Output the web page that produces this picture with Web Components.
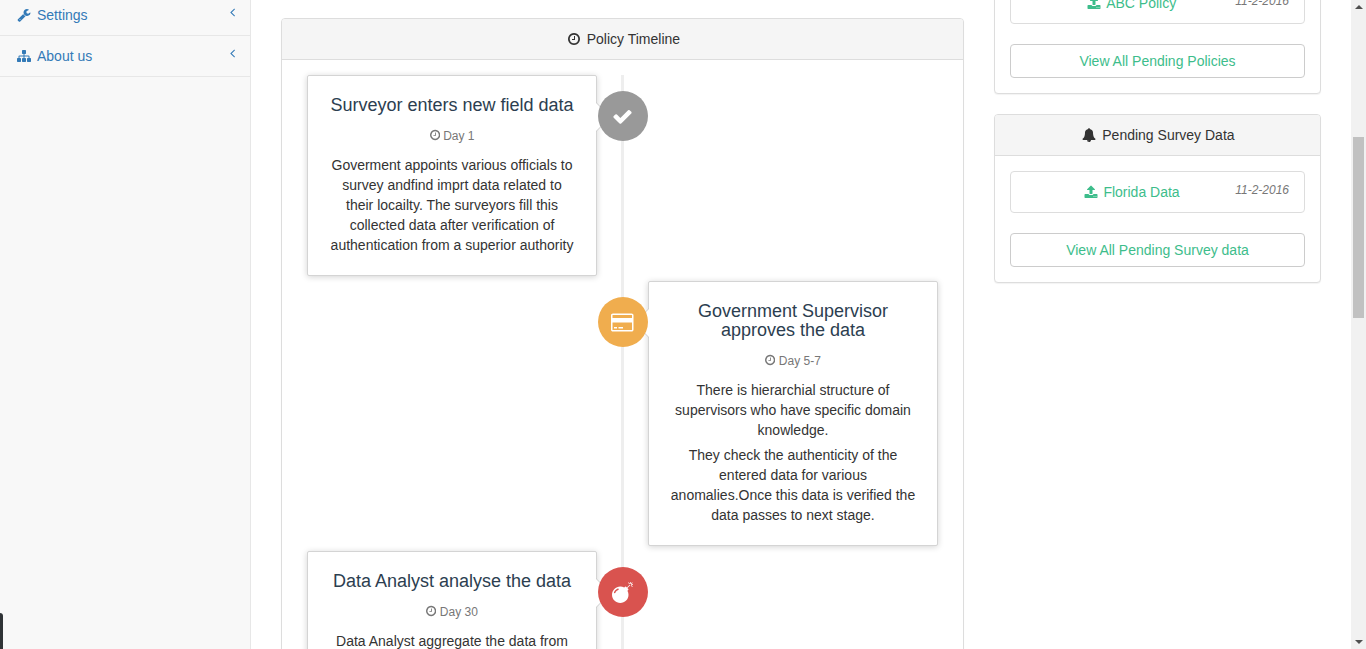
<!DOCTYPE html>
<html lang="en">
<head>
<meta charset="utf-8">
<title>Policy Timeline</title>
<style>
  html, body { margin: 0; height: 649px; overflow: hidden; background: #fff; }
  body { font: 14px/20px "Liberation Sans", Arial, sans-serif; color: #333; }
</style>
</head>
<body>
<app-shell>
  <app-sidebar slot="sidebar">
    <nav-item icon="wrench">Settings</nav-item>
    <nav-item icon="sitemap">About us</nav-item>
  </app-sidebar>

  <ui-panel slot="main" icon="clock" heading="Policy Timeline" flush>
    <policy-timeline>
      <timeline-card side="left" badge="check" color="#999" day="Day 1" heading="Surveyor enters new field data">
        <p>Goverment appoints various officials to survey andfind imprt data related to their locailty. The surveyors fill this collected data after verification of authentication from a superior authority</p>
      </timeline-card>
      <timeline-card side="right" badge="card" color="#f0ad4e" day="Day 5-7" heading="Government Supervisor approves the data">
        <p>There is hierarchial structure of supervisors who have specific domain knowledge.</p>
        <p>They check the authenticity of the entered data for various anomalies.Once this data is verified the data passes to next stage.</p>
      </timeline-card>
      <timeline-card side="left" badge="bomb" color="#d9534f" day="Day 30" heading="Data Analyst analyse the data">
        <p>Data Analyst aggregate the data from</p>
      </timeline-card>
    </policy-timeline>
  </ui-panel>

  <ui-panel slot="side" headless>
    <pending-item date="11-2-2016">ABC Policy</pending-item>
    <view-all>View All Pending Policies</view-all>
  </ui-panel>
  <ui-panel slot="side" icon="bell" heading="Pending Survey Data">
    <pending-item date="11-2-2016">Florida Data</pending-item>
    <view-all>View All Pending Survey data</view-all>
  </ui-panel>

  <fake-scrollbar slot="scrollbar"></fake-scrollbar>
</app-shell>

<script>
// font awesome 4 glyphs, flipped to svg coordinates
const ICONS = {
  check: ['0 0 1792 1792', 'M1671 566q0 40-28 68l-724 724-136 136q-28 28-68 28t-68-28l-136-136-362-362q-28-28-28-68t28-68l136-136q28-28 68-28t68 28l294 295 656-657q28-28 68-28t68 28l136 136q28 28 28 68z'],
  clock: ['128 0 1536 1792', 'M1024 544v448q0 14-9 23t-23 9h-320q-14 0-23-9t-9-23v-64q0-14 9-23t23-9h224v-352q0-14 9-23t23-9h64q14 0 23 9t9 23zm416 352q0-148-73-273t-198-198-273-73-273 73-198 198-73 273 73 273 198 198 273 73 273-73 198-198 73-273zm224 0q0 209-103 385.5t-279.5 279.5-385.5 103-385.5-103-279.5-279.5-103-385.5 103-385.5 279.5-279.5 385.5-103 385.5 103 279.5 279.5 103 385.5z'],
  bell: ['0 0 1792 1792', 'M912 1696q0-16-16-16-59 0-101.5-42.5t-42.5-101.5q0-16-16-16t-16 16q0 73 51.5 124.5t124.5 51.5q16 0 16-16zm816-288q0 52-38 90t-90 38h-448q0 106-75 181t-181 75-181-75-75-181h-448q-52 0-90-38t-38-90q50-42 91-88t85-119.5 74.5-158.5 50-206 19.5-260q0-152 117-282.5t307-158.5q-8-19-8-39 0-40 28-68t68-28 68 28 28 68q0 20-8 39 190 28 307 158.5t117 282.5q0 139 19.5 260t50 206 74.5 158.5 85 119.5 91 88z'],
  wrench: ['0 0 1792 1792', 'M448 1472q0-26-19-45t-45-19-45 19-19 45 19 45 45 19 45-19 19-45zm644-420l-682 682q-37 37-90 37-52 0-91-37l-106-108q-38-36-38-90 0-53 38-91l681-681q39 98 114.5 173.5t173.5 114.5zm634-435q0 39-23 106-47 134-164.5 217.5t-258.5 83.5q-185 0-316.5-131.5t-131.5-316.5 131.5-316.5 316.5-131.5q58 0 121.5 16.5t107.5 46.5q16 11 16 28t-16 28l-293 169v224l193 107q5-3 79-48.5t135.5-81 70.5-35.5q15 0 23.5 10t8.5 25z'],
  sitemap: ['0 0 1792 1792', 'M1792 1248v320q0 40-28 68t-68 28h-320q-40 0-68-28t-28-68v-320q0-40 28-68t68-28h96v-192h-512v192h96q40 0 68 28t28 68v320q0 40-28 68t-68 28h-320q-40 0-68-28t-28-68v-320q0-40 28-68t68-28h96v-192h-512v192h96q40 0 68 28t28 68v320q0 40-28 68t-68 28h-320q-40 0-68-28t-28-68v-320q0-40 28-68t68-28h96v-192q0-52 38-90t90-38h512v-192h-96q-40 0-68-28t-28-68v-320q0-40 28-68t68-28h320q40 0 68 28t28 68v320q0 40-28 68t-68 28h-96v192h512q52 0 90 38t38 90v192h96q40 0 68 28t28 68z'],
  angle: ['0 0 640 1792', 'M627 544q0 13-10 23l-393 393 393 393q10 10 10 23t-10 23l-50 50q-10 10-23 10t-23-10l-466-466q-10-10-10-23t10-23l466-466q10-10 23-10t23 10l50 50q10 10 10 23z'],
  upload: ['0 0 1792 1792', 'M1344 1472q0-26-19-45t-45-19-45 19-19 45 19 45 45 19 45-19 19-45zm256 0q0-26-19-45t-45-19-45 19-19 45 19 45 45 19 45-19 19-45zm128-224v320q0 40-28 68t-68 28h-1472q-40 0-68-28t-28-68v-320q0-40 28-68t68-28h427q21 56 70.5 92t110.5 36h256q61 0 110.5-36t70.5-92h427q40 0 68 28t28 68zm-325-648q-17 40-59 40h-256v448q0 26-19 45t-45 19h-256q-26 0-45-19t-19-45v-448h-256q-42 0-59-40-17-39 14-69l448-448q18-19 45-19t45 19l448 448q31 30 14 69z'],
  card: ['0 0 1920 1792', 'M1760 128q66 0 113 47t47 113v1216q0 66-47 113t-113 47h-1600q-66 0-113-47t-47-113v-1216q0-66 47-113t113-47h1600zm-1600 128q-13 0-22.5 9.5t-9.5 22.5v224h1664v-224q0-13-9.5-22.5t-22.5-9.5h-1600zm1600 1280q13 0 22.5-9.5t9.5-22.5v-608h-1664v608q0 13 9.5 22.5t22.5 9.5h1600zm-1504-128v-128h256v128h-256zm384 0v-128h384v128h-384z'],
  bomb: ['0 0 1792 1792', 'M571 589q-10-25-34-35t-49 0q-108 44-191 127t-127 191q-10 25 0 49t35 34q13 5 24 5 42 0 60-40 34-84 98.5-148.5t148.5-98.5q25-11 35-35t0-49zm942-356l46 46-244 243 68 68q19 19 19 45.5t-19 45.5l-64 64q89 161 89 343 0 143-55.5 273.5t-150 225-225 150-273.5 55.5-273.5-55.5-225-150-150-225-55.5-273.5 55.5-273.5 150-225 225-150 273.5-55.5q182 0 343 89l64-64q19-19 45.5-19t45.5 19l68 68zm8-56q-10 10-22 10-13 0-23-10l-91-90q-9-10-9-23t9-23q10-9 23-9t23 9l90 91q10 9 10 22.5t-10 22.5zm230 230q-11 9-23 9t-23-9l-90-91q-10-9-10-22.5t10-22.5q9-10 22.5-10t22.5 10l91 90q9 10 9 23t-9 23zm41-183q0 14-9 23t-23 9h-96q-14 0-23-9t-9-23 9-23 23-9h96q14 0 23 9t9 23zm-192-192v96q0 14-9 23t-23 9-23-9-9-23v-96q0-14 9-23t23-9 23 9 9 23zm151 55l-91 90q-10 10-22 10-13 0-23-10-10-9-10-22.5t10-22.5l90-91q10-9 23-9t23 9q9 10 9 23t-9 23z']
};

class FaIcon extends HTMLElement {
  connectedCallback() {
    const [box, d] = ICONS[this.getAttribute('name')];
    const size = Number(this.getAttribute('size') || 14);
    const [, , w, h] = box.split(' ').map(Number);
    const width = size * w / h;
    // fw keeps the icons on one column width, like fa-fw
    const boxWidth = this.hasAttribute('fw') ? 18 : width;
    if (!this.shadowRoot) this.attachShadow({ mode: 'open' });
    this.shadowRoot.innerHTML = `
      <style>
        :host { display: inline-flex; justify-content: center; width: ${boxWidth}px; height: ${size}px; vertical-align: -2px; line-height: 0; }
        svg { display: block; flex: none; width: ${width}px; height: ${size}px; fill: currentColor; }
      </style>
      <svg viewBox="${box}" aria-hidden="true"><path d="${d}"/></svg>`;
  }
}

class AppShell extends HTMLElement {
  constructor() {
    super();
    this.attachShadow({ mode: 'open' }).innerHTML = `
      <style>
        :host { display: flex; height: 649px; overflow: hidden; position: relative; }
        .sidebar { flex: 0 0 251px; }
        .content {
          flex: 1; min-width: 0;
          display: grid; grid-template-columns: 683px 327px; column-gap: 30px;
          padding: 0 30px; align-items: start;
        }
        .main { margin-top: 18px; }
        .side { margin-top: -34px; display: flex; flex-direction: column; gap: 20px; }
        .drawer-tab {
          position: absolute; left: 0; bottom: 0; width: 3px; height: 36px;
          background: #2f3336; border-top-right-radius: 3px;
        }
      </style>
      <div class="sidebar"><slot name="sidebar"></slot></div>
      <div class="content">
        <div class="main"><slot name="main"></slot></div>
        <div class="side"><slot name="side"></slot></div>
      </div>
      <slot name="scrollbar"></slot>
      <div class="drawer-tab"></div>`;
  }
}

class AppSidebar extends HTMLElement {
  constructor() {
    super();
    this.attachShadow({ mode: 'open' }).innerHTML = `
      <style>
        :host {
          display: flow-root; height: 649px; box-sizing: border-box;
          background: #f8f8f8; border-right: 1px solid #e7e7e7;
        }
        .list { margin-top: -5px; }
      </style>
      <div class="list"><slot></slot></div>`;
  }
}

class NavItem extends HTMLElement {
  constructor() {
    super();
    this.attachShadow({ mode: 'open' }).innerHTML = `
      <style>
        :host {
          display: flex; height: 40px; box-sizing: content-box; align-items: center;
          padding: 0 15px 0 17px; border-bottom: 1px solid #e7e7e7; color: #337ab7;
        }
        .label { flex: 1; margin-left: 6px; }
        .chev { display: block; margin: -7px 0 0; }
      </style>
      <fa-icon name="${this.getAttribute('icon')}"></fa-icon>
      <span class="label"><slot></slot></span>
      <fa-icon class="chev" name="angle" size="14"></fa-icon>`;
  }
}

class UiPanel extends HTMLElement {
  constructor() {
    super();
    const heading = this.hasAttribute('headless') ? '' : `
      <div class="head"><fa-icon fw name="${this.getAttribute('icon')}"></fa-icon> ${this.getAttribute('heading')}</div>`;
    this.attachShadow({ mode: 'open' }).innerHTML = `
      <style>
        :host {
          display: block; background: #fff; border: 1px solid #ddd; border-radius: 4px;
          box-shadow: 0 1px 1px rgba(0,0,0,.05);
        }
        .head {
          height: 40px; line-height: 40px; text-align: center; background: #f5f5f5;
          border-bottom: 1px solid #ddd; border-radius: 3px 3px 0 0;
        }
        .body { padding: 15px; }
        :host([flush]) .body { padding: 0; }
      </style>
      ${heading}
      <div class="body"><slot></slot></div>`;
  }
}

class PolicyTimeline extends HTMLElement {
  constructor() {
    super();
    this.attachShadow({ mode: 'open' }).innerHTML = `
      <style>
        :host { display: block; position: relative; padding: 15px 25px 0; }
        .line {
          position: absolute; top: 15px; bottom: 0; left: 50%; width: 3px;
          margin-left: -1.5px; background: #eee;
        }
        .rows { position: relative; display: flex; flex-direction: column; gap: 5px; }
      </style>
      <div class="line"></div>
      <div class="rows"><slot></slot></div>`;
  }
}

class TimelineCard extends HTMLElement {
  constructor() {
    super();
    const a = n => this.getAttribute(n);
    this.attachShadow({ mode: 'open' }).innerHTML = `
      <style>
        :host { display: flex; position: relative; }
        :host([side="right"]) { justify-content: flex-end; }
        .card {
          position: relative; width: 290px; box-sizing: border-box; padding: 20px;
          background: #fff; border: 1px solid #d4d4d4; border-radius: 2px;
          box-shadow: 0 1px 6px rgba(0,0,0,.175); text-align: center;
        }
        .card::before, .card::after {
          content: ""; position: absolute; border-style: solid; border-color: transparent;
        }
        :host([side="left"]) .card::before {
          top: 26px; right: -15px; border-width: 15px 0 15px 15px; border-left-color: #ccc;
        }
        :host([side="left"]) .card::after {
          top: 27px; right: -14px; border-width: 14px 0 14px 14px; border-left-color: #fff;
        }
        :host([side="right"]) .card::before {
          top: 26px; left: -15px; border-width: 15px 15px 15px 0; border-right-color: #ccc;
        }
        :host([side="right"]) .card::after {
          top: 27px; left: -14px; border-width: 14px 14px 14px 0; border-right-color: #fff;
        }
        h4 { margin: 0; font-size: 18px; font-weight: 500; line-height: 19px; color: #2c3e50; }
        .meta { margin: 11px 0 9px; font-size: 12px; line-height: 20px; color: #777; }
        .meta fa-icon { vertical-align: -1px; }
        .text { display: flex; flex-direction: column; gap: 5px; }
        ::slotted(p) { margin: 0; }
        .badge {
          position: absolute; top: 16px; left: 50%; width: 50px; height: 50px; margin-left: -25px;
          border-radius: 50%; background: ${a('color')}; color: #fff; z-index: 2;
          display: flex; align-items: center; justify-content: center;
        }
        .badge fa-icon { vertical-align: 0; }
      </style>
      <div class="card">
        <h4>${a('heading')}</h4>
        <div class="meta"><fa-icon name="clock" size="12"></fa-icon> ${a('day')}</div>
        <div class="text"><slot></slot></div>
      </div>
      <div class="badge"><fa-icon name="${a('badge')}" size="21"></fa-icon></div>`;
  }
}

class PendingItem extends HTMLElement {
  constructor() {
    super();
    this.attachShadow({ mode: 'open' }).innerHTML = `
      <style>
        :host {
          display: flex; box-sizing: border-box; height: 42px; padding: 10px 15px;
          border: 1px solid #ddd; border-radius: 4px; color: #3dbd8b; margin-bottom: 20px;
        }
        .name { flex: 1; text-align: center; }
        .date { font-size: 12px; font-style: italic; color: #777; line-height: 17px; }
      </style>
      <span class="name"><fa-icon fw name="upload"></fa-icon> <slot></slot></span>
      <span class="date">${this.getAttribute('date')}</span>`;
  }
}

class ViewAll extends HTMLElement {
  constructor() {
    super();
    this.attachShadow({ mode: 'open' }).innerHTML = `
      <style>
        :host {
          display: block; box-sizing: border-box; height: 34px; line-height: 32px;
          border: 1px solid #ccc; border-radius: 4px; text-align: center; color: #3dbd8b;
        }
      </style>
      <slot></slot>`;
  }
}

class FakeScrollbar extends HTMLElement {
  constructor() {
    super();
    this.attachShadow({ mode: 'open' }).innerHTML = `
      <style>
        :host {
          flex: 0 0 15px; box-sizing: border-box; height: 649px; background: #f1f1f1;
          display: flex; flex-direction: column; align-items: center; padding: 5px 0;
        }
        .up, .down { width: 0; height: 0; border: 4px solid transparent; border-top: 0; border-bottom: 4px solid #505050; }
        .down { margin-top: auto; transform: scaleY(-1); }
        .thumb { width: 11px; height: 181px; margin-top: 128px; background: #c1c1c1; }
      </style>
      <div class="up"></div>
      <div class="thumb"></div>
      <div class="down"></div>`;
  }
}

customElements.define('fa-icon', FaIcon);
customElements.define('app-shell', AppShell);
customElements.define('app-sidebar', AppSidebar);
customElements.define('nav-item', NavItem);
customElements.define('ui-panel', UiPanel);
customElements.define('policy-timeline', PolicyTimeline);
customElements.define('timeline-card', TimelineCard);
customElements.define('pending-item', PendingItem);
customElements.define('view-all', ViewAll);
customElements.define('fake-scrollbar', FakeScrollbar);
</script>
</body>
</html>
